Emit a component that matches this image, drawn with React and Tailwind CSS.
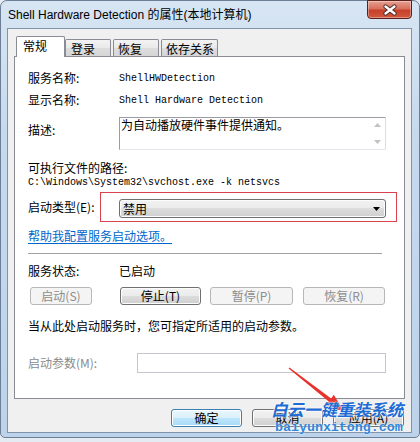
import React from "react";

const cjk = "font-['Noto_Sans_CJK_SC',sans-serif]";
const mono = "font-['Liberation_Mono','Noto_Sans_CJK_SC',monospace]";

function Btn({ children, disabled, def, className = "" }) {
  const look = disabled
    ? "border-[#b4b8bb] bg-[#f4f4f4] text-[#8d8d8d]"
    : def
    ? "border-[#3c7fb1] bg-[linear-gradient(#eaf6fd,#d9f0fc_50%,#bee6fd_50%,#a7d9f5)] text-black shadow-[inset_0_0_0_1px_#fff]"
    : "border-[#707070] bg-[linear-gradient(#f2f2f2,#ebebeb_50%,#dddddd_50%,#cfcfcf)] text-black shadow-[inset_0_0_0_1px_#fcfcfc]";
  return (
    <div
      className={`h-[18px] flex items-center justify-center rounded-[3px] border text-[12px] leading-none ${cjk} ${look} ${className}`}
    >
      {children}
    </div>
  );
}

export default function App() {
  return (
    <div className="relative w-[420px] h-[442px] overflow-hidden bg-[#e4ebf2]">
      <div className="w-[420px] h-[438px] rounded-t-[7px] rounded-b-[5px] border border-[#6c7f96] bg-[linear-gradient(180deg,#d7e5f3,#c6daee_30%,#bcd3eb)] pl-[6px] pr-[7px] pb-[4px] flex flex-col">
        {/* title bar */}
        <div className="h-[27px] flex items-start justify-between">
          <div className="pl-[1px] pt-[6px] leading-[16px] text-[12px] text-black font-['Liberation_Sans','Noto_Sans_CJK_SC',sans-serif]">
            Shell Hardware Detection 的属性(本地计算机)
          </div>
          <div className="w-[45px] h-[19px] -mt-px rounded-b-[4px] border border-[#5b2019] bg-[linear-gradient(#e7a193,#d7705c_45%,#c6402a_55%,#d0583d)] shadow-[inset_0_0_0_1px_rgba(255,255,255,0.35)] flex items-center justify-center">
            <svg width="16" height="12" viewBox="-8 -6 16 12">
              <path d="M-4.5,-3.5 L4.5,3.5 M4.5,-3.5 L-4.5,3.5" stroke="#4a2a26" strokeWidth="4.2" strokeLinecap="round" />
              <path d="M-4.5,-3.5 L4.5,3.5 M4.5,-3.5 L-4.5,3.5" stroke="#ffffff" strokeWidth="2.4" strokeLinecap="round" />
            </svg>
          </div>
        </div>

        {/* client area */}
        <div className="h-[405px] border border-[#8193aa] bg-[#f0f0f0] pt-[7px] pl-[6px] pr-[6px] flex flex-col">
          {/* tabs */}
          <div className={`h-[20px] flex items-end pl-[2px] text-[12px] text-black ${cjk}`}>
            <div className="relative z-10 -mb-px h-[21px] w-[49px] bg-white border border-b-0 border-[#898c95] rounded-t-[2px] pl-[6px] pt-[1px] leading-[16px]">
              常规
            </div>
            <div className="h-[17px] w-[46px] border border-b-0 border-[#898c95] rounded-t-[2px] bg-[linear-gradient(#f3f3f3,#e9e9e9_50%,#dddddd_50%,#d6d6d6)] pl-[5px] pt-[1px] leading-[16px]">
              登录
            </div>
            <div className="ml-[2px] h-[17px] w-[46px] border border-b-0 border-[#898c95] rounded-t-[2px] bg-[linear-gradient(#f3f3f3,#e9e9e9_50%,#dddddd_50%,#d6d6d6)] pl-[4px] pt-[1px] leading-[16px]">
              恢复
            </div>
            <div className="ml-[2px] h-[17px] w-[57px] border border-b-0 border-[#898c95] rounded-t-[2px] bg-[linear-gradient(#f3f3f3,#e9e9e9_50%,#dddddd_50%,#d6d6d6)] pl-[4px] pt-[1px] leading-[16px]">
              依存关系
            </div>
          </div>

          {/* panel */}
          <div className={`h-[343px] bg-white border border-[#898c95] pl-[13px] pt-[11px] flex flex-col text-[12px] text-black ${cjk}`}>
            <div className="h-[20px] flex items-center">
              <div className="w-[91px]">服务名称:</div>
              <div className={`${mono} text-[10px]`}>ShellHWDetection</div>
            </div>
            <div className="mt-[2px] h-[20px] flex items-center">
              <div className="w-[91px]">显示名称:</div>
              <div className={`${mono} text-[10px]`}>Shell Hardware Detection</div>
            </div>
            <div className="mt-[7px] h-[33px] flex items-start">
              <div className="w-[91px] mt-[3px] leading-[20px]">描述:</div>
              <div className="w-[267px] h-[33px] border border-[#9a9da4] border-r-[#dcdde2] border-b-[#e3e6ea] flex">
                <div className="flex-1 pl-px leading-[14px]">为自动播放硬件事件提供通知。</div>
                <div className="w-[15px] flex flex-col items-center justify-between py-[5px]">
                  <svg width="7" height="4" viewBox="0 0 7 4">
                    <path d="M0,4 L3.5,0 L7,4 Z" fill="#c2c2c2" />
                  </svg>
                  <svg width="7" height="4" viewBox="0 0 7 4">
                    <path d="M0,0 L3.5,4 L7,0 Z" fill="#c2c2c2" />
                  </svg>
                </div>
              </div>
            </div>
            <div className="mt-[10px] h-[16px] leading-[16px]">可执行文件的路径:</div>
            <div className={`h-[14px] leading-[14px] ${mono} text-[10px]`}>
              C:\Windows\System32\svchost.exe -k netsvcs
            </div>
            <div className="mt-[2px] h-[30px] flex items-center">
              <div className="w-[72px] whitespace-nowrap">启动类型(E):</div>
              <div className="w-[297px] h-[30px] border border-[#d8434e] pl-[18px] pt-[6px]">
                <div className="w-[267px] h-[19px] rounded-[3px] border border-[#707070] bg-[linear-gradient(#f2f2f2,#ebebeb_50%,#dddddd_50%,#cfcfcf)] shadow-[inset_0_0_0_1px_#fcfcfc] flex items-center justify-between pl-[3px] pr-[5px]">
                  <span className="leading-none">禁用</span>
                  <svg width="7" height="4" viewBox="0 0 7 4">
                    <path d="M0,0 L7,0 L3.5,4 Z" fill="#000" />
                  </svg>
                </div>
              </div>
            </div>
            <div className="mt-[4px] h-[20px] flex items-center">
              <span className="text-[#0066cc] underline underline-offset-2">帮助我配置服务启动选项。</span>
            </div>
            <div className="mt-[7px] h-px w-[354px] bg-[#a0a0a0]" />
            <div className="mt-[7px] h-[20px] flex items-center">
              <div className="w-[91px]">服务状态:</div>
              <div>已启动</div>
            </div>
            <div className="mt-[6px] flex">
              <Btn disabled className="ml-[2px] w-[62px]">启动(S)</Btn>
              <Btn className="ml-[28px] w-[81px]">停止(T)</Btn>
              <Btn disabled className="ml-[9px] w-[83px]">暂停(P)</Btn>
              <Btn disabled className="ml-[10px] w-[82px]">恢复(R)</Btn>
            </div>
            <div className="mt-[11px] h-[20px] flex items-center">当从此处启动服务时，您可指定所适用的启动参数。</div>
            <div className="mt-[17px] h-[20px] flex items-center">
              <div className="w-[109px] text-[#8b8b8b]">启动参数(M):</div>
              <div className="w-[249px] h-[20px] border border-[#c3c6cc] bg-white" />
            </div>
          </div>

          {/* bottom buttons */}
          <div className="mt-[10px] flex justify-end gap-[10px] pr-[1px]">
            <Btn def className="w-[71px]">确定</Btn>
            <Btn className="w-[71px]">取消</Btn>
            <Btn className="w-[71px]">应用(A)</Btn>
          </div>
        </div>
      </div>

      {/* annotation arrow */}
      <svg className="absolute left-0 top-0 pointer-events-none" width="420" height="442" viewBox="0 0 420 442">
        <polygon
          points="288.6,368.4 328.8,401.6 325.8,405 344,411.5 333.8,394.8 331.2,398.4 289.4,367.6"
          fill="#e8322c"
        />
      </svg>

      {/* watermark */}
      <div className="absolute left-[271px] top-[401px] pointer-events-none text-[16.5px] leading-none font-bold italic text-[#1d6bd3] font-['Noto_Sans_CJK_SC',sans-serif] [text-shadow:0_0_2px_#fff,0_0_2px_#fff]">
        白云一键重装系统
      </div>
      <div className="absolute left-[275px] top-[421px] pointer-events-none text-[13.3px] leading-none font-bold text-[#2f86dc] font-['Liberation_Mono',monospace] [text-shadow:0_0_2px_#fff]">
        baiyunxitong.com
      </div>
    </div>
  );
}
